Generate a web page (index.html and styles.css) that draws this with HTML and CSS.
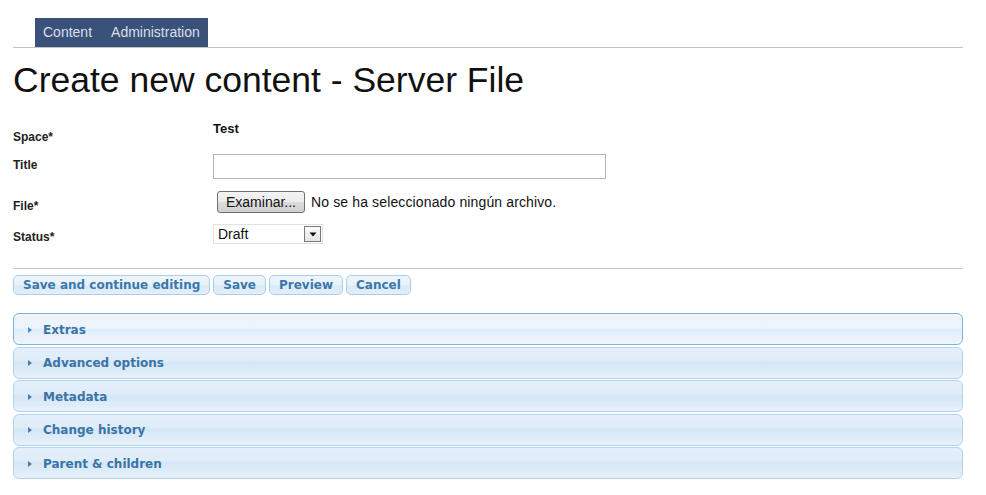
FILE: index.html
```html
<!DOCTYPE html>
<html>
<head>
<meta charset="utf-8">
<title>Create new content - Server File</title>
<link rel="stylesheet" href="styles.css">
</head>
<body>
<div class="page">
  <div class="header">
    <ul class="tabs">
      <li>Content</li>
      <li>Administration</li>
    </ul>
  </div>
  <h1>Create new content - Server File</h1>
  <form class="form">
    <div class="row row-space">
      <div class="label">Space*</div>
      <div class="value value-test">Test</div>
    </div>
    <div class="row row-title">
      <div class="label">Title</div>
      <div class="value"><input class="text-input" type="text"></div>
    </div>
    <div class="row row-file">
      <div class="label">File*</div>
      <div class="value file-value">
        <span class="file-btn">Examinar...</span>
        <span class="file-name">No se ha seleccionado ningún archivo.</span>
      </div>
    </div>
    <div class="row row-status">
      <div class="label">Status*</div>
      <div class="value">
        <div class="select">
          <span class="select-text">Draft</span>
          <span class="select-arrow"><svg width="8" height="5" viewBox="0 0 8 5"><path d="M0.5 0.5h7L4 4.5z" fill="#111"/></svg></span>
        </div>
      </div>
    </div>
    <div class="actions">
      <button type="button" class="btn">Save and continue editing</button>
      <button type="button" class="btn">Save</button>
      <button type="button" class="btn">Preview</button>
      <button type="button" class="btn">Cancel</button>
    </div>
    <div class="fieldsets">
      <div class="fs fs-active"><span class="tri"></span><span class="fs-title">Extras</span></div>
      <div class="fs"><span class="tri"></span><span class="fs-title">Advanced options</span></div>
      <div class="fs"><span class="tri"></span><span class="fs-title">Metadata</span></div>
      <div class="fs"><span class="tri"></span><span class="fs-title">Change history</span></div>
      <div class="fs"><span class="tri"></span><span class="fs-title">Parent &amp; children</span></div>
    </div>
  </form>
</div>
</body>
</html>
```
FILE: styles.css
```css
html, body {
  margin: 0;
  padding: 0;
  background: #ffffff;
}
body {
  font-family: "Liberation Sans", Arial, sans-serif;
  color: #111;
}
.page {
  width: 950px;
  padding: 18px 0 0 13px;
}
.header {
  border-bottom: 1px solid #c4c4c4;
}
.tabs {
  list-style: none;
  margin: 0 0 0 22px;
  padding: 0;
  display: inline-flex;
  height: 29px;
  align-items: center;
  background: #3a5279;
  vertical-align: bottom;
}
.tabs li {
  font-size: 14px;
  color: #d9dfe9;
  line-height: 29px;
}
.tabs li:first-child {
  padding: 0 10px 0 8px;
}
.tabs li:last-child {
  padding: 0 8px 0 9px;
}
h1 {
  margin: 12px 0 0;
  font-size: 35.5px;
  line-height: 41px;
  font-weight: normal;
  color: #111;
}
.form {
  margin: 19px 0 0;
}
.row {
  display: flex;
  align-items: flex-start;
}
.label {
  width: 200px;
  flex: none;
  font-size: 12px;
  line-height: 14px;
  font-weight: bold;
  color: #222;
}
.value {
  font-size: 14px;
}
.row-space { height: 34px; }
.row-space .label { padding-top: 10px; }
.value-test {
  font-size: 13px;
  line-height: 15px;
  font-weight: bold;
  padding-top: 1px;
}
.row-title { height: 35px; }
.row-title .label { padding-top: 4px; }
.text-input {
  display: block;
  box-sizing: border-box;
  width: 393px;
  height: 25px;
  margin: 0;
  border: 1px solid #b5b5b5;
  background: #fff;
  padding: 0 4px;
}
.row-file { height: 33px; }
.row-file .label { padding-top: 10px; }
.file-value {
  display: flex;
  align-items: center;
  margin-top: 2px;
}
.file-btn {
  box-sizing: border-box;
  height: 22px;
  width: 88px;
  margin-left: 4px;
  border: 1px solid #707070;
  border-radius: 3px;
  background: linear-gradient(#f3f3f3 0%, #ebebeb 50%, #dddddd 51%, #cfcfcf 100%);
  font-size: 14px;
  line-height: 20px;
  text-align: center;
  color: #111;
}
.file-name {
  margin-left: 6px;
  font-size: 14px;
  letter-spacing: 0.13px;
  color: #111;
}
.row-status { height: 28px; }
.row-status .label { padding-top: 8px; }
.select {
  margin-top: 2px;
  box-sizing: border-box;
  width: 110px;
  height: 20px;
  border: 1px solid #e2e2e2;
  display: flex;
  align-items: center;
  justify-content: space-between;
  padding: 0 1px 0 4px;
}
.select-text {
  font-size: 14px;
  line-height: 18px;
  color: #111;
}
.select-arrow {
  box-sizing: border-box;
  width: 17px;
  height: 16px;
  border: 1px solid #7a7a7a;
  background: linear-gradient(#fafafa, #e6e6e6);
  display: flex;
  align-items: center;
  justify-content: center;
}
.select-arrow svg {
  display: block;
}
.actions {
  margin-top: 18px;
  border-top: 1px solid #c4c4c4;
  padding-top: 6px;
  display: flex;
  gap: 3px;
}
.btn {
  box-sizing: border-box;
  height: 20px;
  margin: 0;
  padding: 0 9px;
  border: 1px solid #a9cdea;
  border-radius: 5px;
  background: linear-gradient(#eef6fc 0%, #e6f1fb 50%, #d9eaf8 55%, #e3effa 100%);
  font-family: "DejaVu Sans", Verdana, sans-serif;
  font-weight: bold;
  font-size: 12px;
  line-height: 18px;
  color: #3b77ab;
}
.fieldsets {
  margin-top: 18px;
  display: flex;
  flex-direction: column;
  gap: 1.5px;
}
.fs {
  box-sizing: border-box;
  height: 32px;
  border: 1px solid #b3d2ee;
  border-radius: 6px;
  background: linear-gradient(#e3eff9 0%, #e0edf9 40%, #d4e6f6 50%, #dcebf8 70%, #e7f1fb 100%);
  display: flex;
  align-items: center;
  padding-left: 14px;
  padding-top: 1px;
}
.fs-active {
  border-color: #7fb1de;
  background: linear-gradient(#eef5fc 0%, #ebf3fc 45%, #e0edf9 52%, #e7f1fb 70%, #eef5fc 100%);
}
.tri {
  width: 0;
  height: 0;
  border-top: 3.5px solid transparent;
  border-bottom: 3.5px solid transparent;
  border-left: 4px solid #4e7ea8;
}
.fs-active .tri {
  border-left-color: #3d92dc;
}
.fs-title {
  margin-left: 11px;
  font-family: "DejaVu Sans", Verdana, sans-serif;
  font-weight: bold;
  font-size: 12px;
  color: #3a74a7;
}
```
